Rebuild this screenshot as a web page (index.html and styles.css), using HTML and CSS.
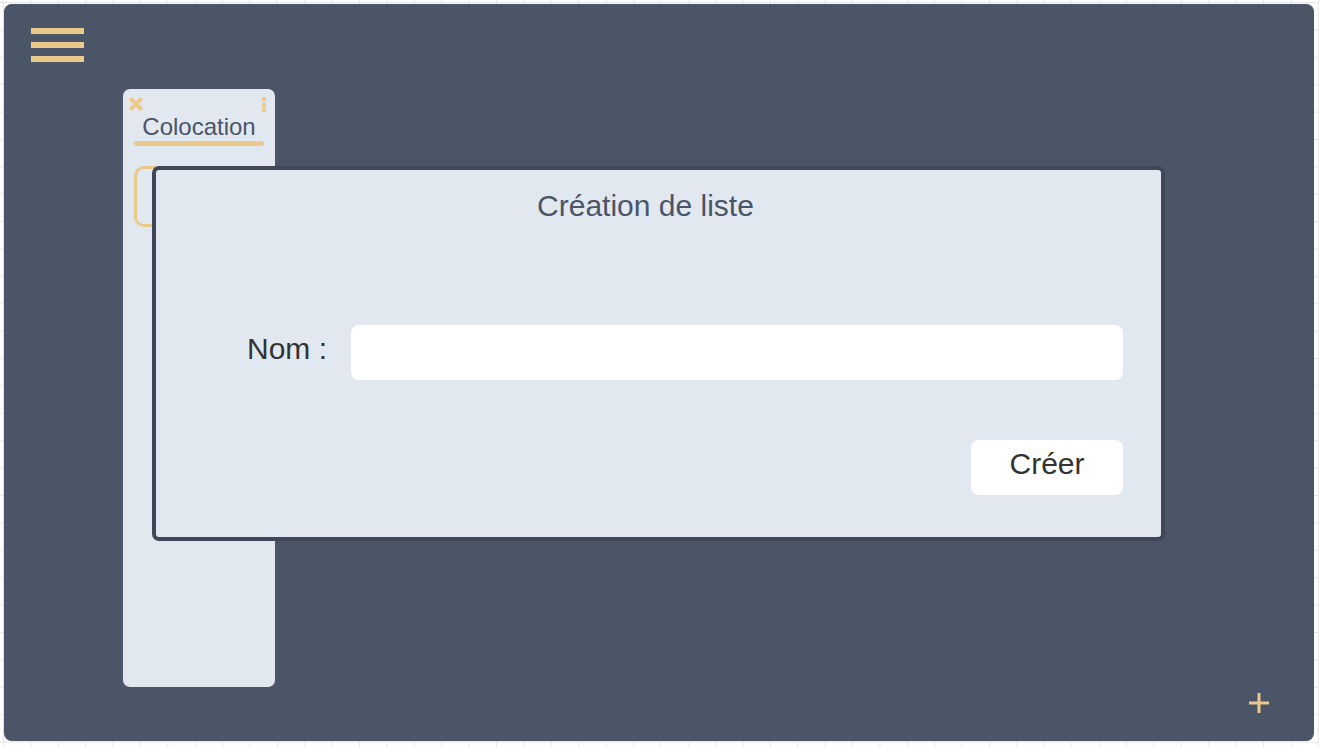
FILE: index.html
```html
<!DOCTYPE html>
<html lang="fr">
<head>
<meta charset="utf-8">
<title>Listes</title>
<link rel="stylesheet" href="styles.css">
</head>
<body>
<div class="panel">
  <button class="menu" aria-label="Menu">
    <span class="bar"></span><span class="bar"></span><span class="bar"></span>
  </button>
  <div class="board">
    <div class="list-card">
      <div class="card-top">
        <svg class="close" width="14" height="14" viewBox="0 0 14 14"><path d="M2.5 2.5 L11.5 11.5 M11.5 2.5 L2.5 11.5" stroke="#ebc98b" stroke-width="4.2" stroke-linecap="round"/></svg>
        <span class="dots"><i></i><i></i><i></i></span>
      </div>
      <div class="card-title">Colocation</div>
      <div class="underline"></div>
      <div class="add-item"></div>
    </div>
  </div>
  <div class="modal">
    <div class="modal-title">Création de liste</div>
    <div class="form-row">
      <label class="label" for="nom">Nom :</label>
      <input class="input" id="nom" type="text">
    </div>
    <div class="actions">
      <button class="btn">Créer</button>
    </div>
  </div>
  <button class="fab" aria-label="Ajouter">
    <svg width="22" height="22" viewBox="0 0 22 22"><path d="M11 1 V21 M1 11 H21" stroke="#ebc98b" stroke-width="3"/></svg>
  </button>
</div>
</body>
</html>
```
FILE: styles.css
```css
html, body {
  margin: 0;
  height: 100%;
}
body {
  background-color: #ffffff;
  background-image:
    linear-gradient(to right, #e6e6e6 1px, transparent 1px),
    linear-gradient(to bottom, #e6e6e6 1px, transparent 1px);
  background-size: 27.4px 27.4px;
  background-position: 3px 2px;
  font-family: "Liberation Sans", Arial, sans-serif;
  overflow: hidden;
}
.panel {
  position: relative;
  box-sizing: border-box;
  margin: 4px 0 0 4px;
  width: 1310px;
  height: 737px;
  background: #4a5568;
  border-radius: 8px;
  padding: 24px 27px;
  box-shadow: 0 0 1px rgba(0,0,0,0.25);
}
.menu {
  display: flex;
  flex-direction: column;
  gap: 8px;
  padding: 0;
  margin: 0;
  border: 0;
  background: none;
  width: 53px;
}
.bar {
  display: block;
  width: 53px;
  height: 6px;
  background: #ebc98b;
  box-shadow: 0 0 1px rgba(120,110,90,0.8);
}
.board {
  display: flex;
  margin: 27px 0 0 92px;
}
.list-card {
  box-sizing: border-box;
  width: 152px;
  height: 598px;
  background: #e2e8f0;
  border-radius: 7px;
  padding: 8px 11px 0 11px;
}
.card-top {
  display: flex;
  justify-content: space-between;
  align-items: flex-start;
  height: 14px;
  margin-left: -5px;
  margin-right: -2px;
}
.dots {
  display: flex;
  flex-direction: column;
  gap: 1.5px;
  padding-top: 0;
}
.dots i {
  display: block;
  width: 4px;
  height: 4px;
  background: #ebc98b;
}
.card-title {
  text-align: center;
  font-size: 24px;
  color: #4a5568;
  line-height: 28px;
  margin-top: 2px;
}
.underline {
  height: 5px;
  background: #ebc98b;
  border-radius: 3px;
  margin-top: 0;
}
.add-item {
  box-sizing: border-box;
  height: 61px;
  margin-top: 20px;
  border: 3px solid #ebc98b;
  border-radius: 10px;
}
.modal {
  position: absolute;
  left: 148px;
  top: 162px;
  box-sizing: border-box;
  width: 1013px;
  height: 375px;
  background: #e2e8f0;
  border: 4px solid #3f4759;
  border-radius: 7px;
  display: flex;
  flex-direction: column;
}
.modal-title {
  text-align: center;
  font-size: 30px;
  line-height: 34px;
  color: #4a5568;
  margin-top: 19px;
  margin-left: -26px;
}
.form-row {
  display: flex;
  align-items: center;
  gap: 24px;
  margin: 102px 38px 0 91px;
}
.label {
  font-size: 30px;
  color: #333333;
  padding-bottom: 8px;
}
.input {
  flex: 1;
  height: 55px;
  box-sizing: border-box;
  border: 0;
  border-radius: 8px;
  background: #ffffff;
  font-size: 24px;
  padding: 0 12px;
  font-family: inherit;
}
.actions {
  display: flex;
  justify-content: flex-end;
  margin: 60px 38px 0 0;
}
.btn {
  width: 152px;
  height: 55px;
  border: 0;
  border-radius: 8px;
  background: #ffffff;
  font-family: inherit;
  font-size: 30px;
  color: #333333;
  padding: 0 0 8px 0;
}
.fab {
  position: absolute;
  right: 44px;
  bottom: 27px;
  width: 22px;
  height: 22px;
  padding: 0;
  border: 0;
  background: none;
  display: flex;
}
```
